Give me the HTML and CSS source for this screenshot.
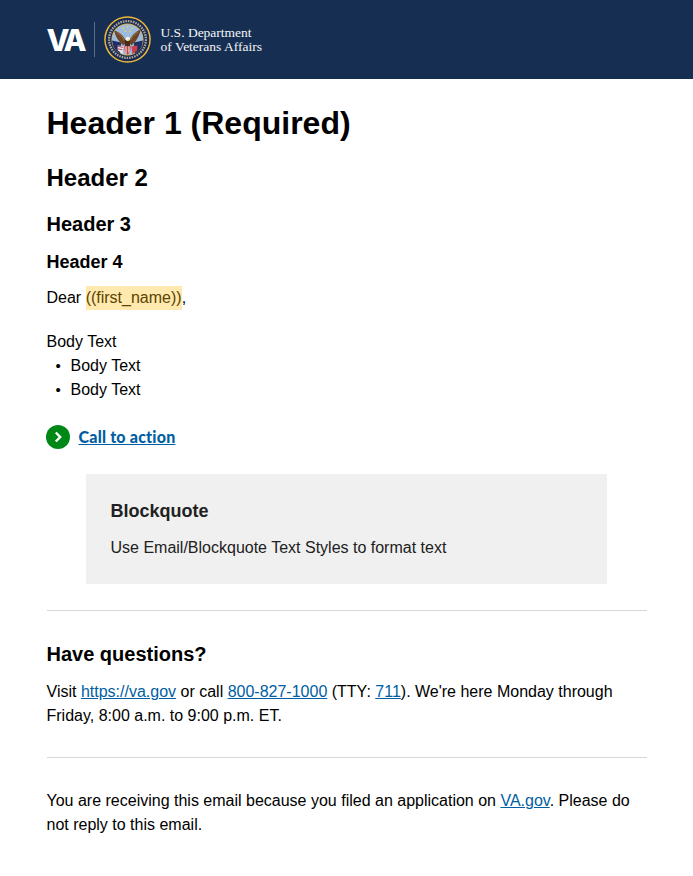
FILE: index.html
```html
<!DOCTYPE html>
<html lang="en">
<head>
<meta charset="utf-8">
<title>VA email template</title>
<link rel="stylesheet" href="styles.css">
</head>
<body>
<header class="banner">
  <div class="brand">
    <span class="brand-va">VA</span>
    <span class="brand-rule"></span>
    <svg class="seal" viewBox="0 0 48 48" width="47" height="47" aria-hidden="true">
      <circle cx="24" cy="24" r="23.800" fill="#eab83c"/>
      <circle cx="24" cy="24" r="22.300" fill="#1a2a52"/>
      <circle cx="24" cy="24" r="18.800" fill="none" stroke="#a9a99a" stroke-width="2.400" stroke-dasharray="1.600 1"/>
      <circle cx="24" cy="24" r="16.400" fill="#e3ad30"/>
      <circle cx="24" cy="24" r="15.700" fill="#9dbcdb"/>
      <path d="M8.300 25l9.200 2-1 11.500a16 16 0 0 1-8.200-13.500z" fill="#1d2f66"/>
      <path d="M39.700 25l-9.200 2 1 11.500a16 16 0 0 0 8.200-13.500z" fill="#1d2f66"/>
      <path d="M14 30l6 1-1 8-5-4z" fill="#e6e8ec"/>
      <path d="M34 30l-6 1 1 8 5-4z" fill="#c93f4a"/>
      <path d="M14 31l5.500 1M14 33.500l5 1" stroke="#c93f4a" stroke-width="1"/>
      <path d="M10.500 15c4 .5 9.500 4.500 12 11l-2.500 4c-4.500-3.500-8-8-9.500-15z" fill="#6e4526"/>
      <path d="M37.500 14c-4 1-9.500 5.500-12 12l2.500 4c4.500-3.500 8-9 9.500-16z" fill="#6e4526"/>
      <path d="M13 17c3 1.500 6 4.500 8 8M35 16.500c-3 1.500-6 4.500-8 8" stroke="#9b7446" stroke-width="1" fill="none"/>
      <path d="M21 25.500c1-2.500 5-2.500 6 0l-.500 6h-5z" fill="#4a2c19"/>
      <circle cx="24.300" cy="23.400" r="2.200" fill="#f4f2e8"/>
      <path d="M24.300 24l2.400.8-2 .7z" fill="#e3ad30"/>
      <path d="M20.500 31h7l-1 6-2.500 2.500-2.500-2.500z" fill="#c93f4a"/>
      <path d="M22 31h1v7.200h-1zM25 31h1v6.500h-1z" fill="#f4f2e8"/>
      <path d="M19.500 11.500l1 1-1 1-1-1zM24 10l1 1-1 1-1-1zM28.500 11.500l1 1-1 1-1-1zM22 14.500l1 1-1 1-1-1zM26.500 14.500l1 1-1 1-1-1z" fill="#f3d64a"/>
    </svg>
    <span class="brand-name">U.S. Department<br>of Veterans Affairs</span>
  </div>
</header>
<main class="content">
  <h1 class="h1">Header 1 (Required)</h1>
  <h2 class="h2">Header 2</h2>
  <h3 class="h3">Header 3</h3>
  <h4 class="h4">Header 4</h4>
  <p class="greeting">Dear <span class="placeholder">((first_name))</span>,</p>
  <p class="body-text">Body Text</p>
  <ul class="list">
    <li>Body Text</li>
    <li>Body Text</li>
  </ul>
  <a class="cta" href="#">
    <svg class="cta-icon" viewBox="0 0 24 24" width="24" height="24" aria-hidden="true">
      <circle cx="12" cy="12" r="12" fill="#008817"/>
      <path d="M9.800 7.500L14.200 12l-4.400 4.500" fill="none" stroke="#fff" stroke-width="2.400"/>
    </svg>
    <span class="cta-label">Call to action</span>
  </a>
  <blockquote class="quote">
    <p class="quote-title">Blockquote</p>
    <p class="quote-text">Use Email/Blockquote Text Styles to format text</p>
  </blockquote>
  <hr class="rule">
  <h3 class="questions">Have questions?</h3>
  <p class="para">Visit <a href="#">https://va.gov</a> or call <a href="#">800-827-1000</a> (TTY: <a href="#">711</a>). We're here Monday through Friday, 8:00 a.m. to 9:00 p.m. ET.</p>
  <hr class="rule rule-lower">
  <p class="para">You are receiving this email because you filed an application on <a href="#">VA.gov</a>. Please do not reply to this email.</p>
</main>
</body>
</html>
```
FILE: styles.css
```css
* { box-sizing: border-box; }
html, body { margin: 0; padding: 0; }
body {
  background: #fff;
  color: #000;
  font-family: "Liberation Sans", Arial, sans-serif;
  font-size: 16px;
  line-height: 24px;
}
.banner {
  background: #162e51;
  height: 79px;
  display: flex;
  align-items: center;
  padding-left: 46.5px;
}
.brand { display: flex; align-items: center; }
.brand-va {
  color: #fff;
  font-family: Inter, "Liberation Sans", sans-serif;
  font-weight: 800;
  font-size: 30px;
  line-height: 30px;
  letter-spacing: -3.500px;
  width: 47px;
}
.brand-rule { width: 1px; height: 35px; background: #5b6d88; }
.seal { margin-left: 9.500px; }
.brand-name {
  margin-left: 9.500px;
  color: #f4f5f7;
  font-family: "Liberation Serif", serif;
  font-size: 13.500px;
  line-height: 13.500px;
}
.content { width: 600px; margin: 0 auto; padding-top: 20px; }
.h1, .h2, .h3, .h4, .questions { margin: 0; font-weight: 700; }
.h1 { font-size: 32px; line-height: 48px; }
.h2 { font-size: 24px; line-height: 36px; margin-top: 13px; }
.h3 { font-size: 20px; line-height: 30px; margin-top: 13px; }
.h4 { font-size: 18px; line-height: 27px; margin-top: 10px; }
.greeting { margin: 10px 0 0; }
.placeholder { background: #ffe9ae; color: #5b4300; display: inline-block; }
.body-text { margin: 20px 0 0; }
.list { margin: 0; padding: 0 0 0 9px; list-style: none; }
.list li { display: flex; }
.list li::before { content: "\2022"; width: 15px; font-size: 15px; }
.cta {
  display: flex;
  align-items: center;
  gap: 8.500px;
  margin-top: 23px;
  margin-left: -0.500px;
  width: max-content;
  text-decoration: none;
}
.cta-label {
  color: #005ea2;
  font-family: Lato, "Noto Sans", sans-serif;
  font-weight: 900;
  font-size: 16px;
  letter-spacing: 0.200px;
  text-decoration: underline;
}
.quote {
  margin: 25px 0 0 39.500px;
  width: 521px;
  height: 110px;
  padding: 24px 24px 24px 24.500px;
  background: #f0f0f0;
  color: #212121;
}
.quote-title { margin: 0; font-size: 18px; font-weight: 700; line-height: 27px; }
.quote-text { margin: 11px 0 0; line-height: 24px; }
.rule { border: 0; border-top: 1px solid #d6d7d9; margin: 26px 0 0; }
.questions { font-size: 20px; line-height: 30px; margin-top: 28px; }
.para { margin: 11px 0 0; }
.para a { color: #005ea2; }
.rule-lower { margin-top: 29px; }
.rule-lower + .para { margin-top: 31px; }
```
